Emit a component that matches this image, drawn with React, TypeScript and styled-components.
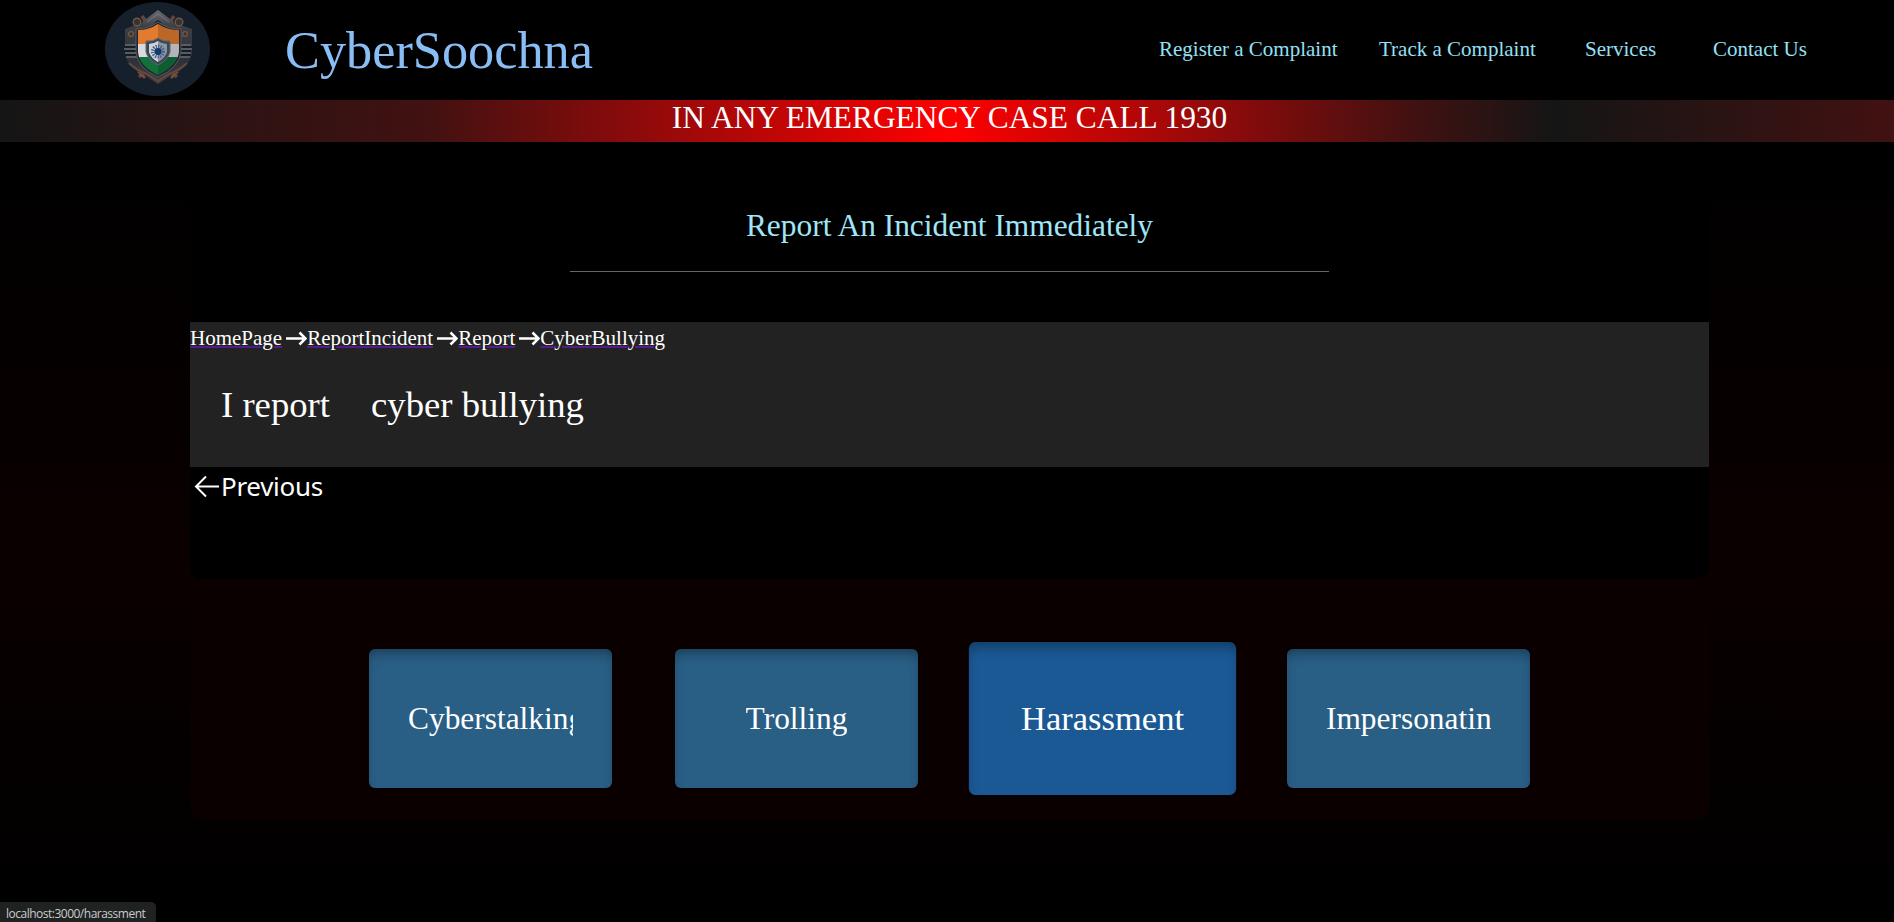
import React from "react";
import styled, { createGlobalStyle } from "styled-components";

const Global = createGlobalStyle`
  * { box-sizing: border-box; }
  html, body { margin: 0; height: 100%; background: #000; overflow: hidden; }
  body { font-family: "Liberation Serif", "Times New Roman", serif; color: #fff; }
`;

const Page = styled.div`
  width: 100%;
  height: 922px;
  display: flex;
  flex-direction: column;
`;
const Header = styled.header`
  height: 100px;
  display: flex;
  align-items: center;
  background: #000;
`;
const Logo = styled.svg`
  width: 105px;
  height: 94px;
  margin: 0 75px 2px 105px;
`;
const Brand = styled.h1`
  margin: 0;
  width: 874px;
  font-size: 52.3px;
  font-weight: 400;
  color: #88bdf5;
`;
const Nav = styled.nav`
  display: flex;
  padding-bottom: 2px;
  font-size: 21px;
  white-space: nowrap;
`;
const NavLink = styled.a<{ $w: number }>`
  width: ${(p) => p.$w}px;
  color: #93e1f5;
`;
const Banner = styled.div`
  height: 42px;
  padding-left: 5px;
  text-align: center;
  font-size: 31.4px;
  line-height: 36px;
  background: linear-gradient(90deg, #151515, #421111 430px, #f00 950px, #421111 1410px, #151515 1555px, #421111 1894px);
`;
const Body = styled.main`
  flex: 1;
  padding: 0 185px 0 190px;
  background: linear-gradient(180deg, #000, #0a0000 52.5%, #000);
`;
const Shell = styled.div`
  height: 677px;
  border-radius: 12px;
  background: linear-gradient(180deg, #000 80px, #0a0000 437px);
`;
const Report = styled.section`
  height: 437px;
  border-radius: 0 0 12px 12px;
  background: #000;
`;
const Heading = styled.h2`
  width: 759px;
  height: 130px;
  margin: 0 auto;
  padding-top: 66px;
  border-bottom: 1px solid #666;
  font-size: 31.4px;
  line-height: 36px;
  font-weight: 400;
  text-align: center;
  color: #a0e6f8;
`;
const Summary = styled.div`
  height: 145px;
  margin-top: 50px;
  background: #222;
`;
const Trail = styled.div`
  height: 32px;
  display: flex;
  align-items: center;
  font-size: 21px;
`;
const Crumb = styled.a`
  color: #fff;
  text-decoration: underline #551a8b 2px;
`;
const TrailArrow = styled.svg`
  width: 21px;
  height: 16px;
  margin-left: 4px;
`;
const Statement = styled.div`
  display: flex;
  gap: 41px;
  padding: 30px 0 0 31px;
  font-size: 36.7px;
  line-height: 42px;
`;
const Previous = styled.a`
  display: flex;
  align-items: center;
  height: 38px;
  padding-left: 4px;
  font: 26px "Noto Sans", sans-serif;
  letter-spacing: -0.3px;
`;
const BackArrow = styled.svg`
  width: 26px;
  height: 24px;
  margin-right: 1px;
`;
const Cards = styled.div`
  height: 240px;
  display: flex;
  gap: 63px;
  padding: 70px 0 0 179px;
`;
const Card = styled.a<{ $active?: boolean }>`
  width: 243px;
  height: 139px;
  display: flex;
  align-items: center;
  justify-content: center;
  border-radius: 6px;
  background: ${(p) => (p.$active ? "#1b5995" : "#295e85")};
  box-shadow: inset 0 8px 12px -4px rgba(0, 0, 0, 0.35);
  transform: ${(p) => (p.$active ? "scale(1.1)" : "none")};
`;
const CardLabel = styled.span`
  max-width: 165px;
  overflow: hidden;
  white-space: nowrap;
  font-size: 31.4px;
  line-height: 36px;
`;
const StatusBar = styled.div`
  position: absolute;
  left: 0;
  bottom: 0;
  width: 156px;
  height: 20px;
  padding-left: 6px;
  border-radius: 0 5px 0 0;
  background: #202222;
  color: #c8cccc;
  font: 12px/23px "Open Sans", sans-serif;
  letter-spacing: -0.5px;
`;

const links: [string, number][] = [
  ["Register a Complaint", 220],
  ["Track a Complaint", 206],
  ["Services", 128],
  ["Contact Us", 100],
];
const crumbs = ["HomePage", "ReportIncident", "Report", "CyberBullying"];
const cards = ["Cyberstalking", "Trolling", "Harassment", "Impersonatin"];

function Emblem() {
  return (
    <Logo viewBox="0 0 105 94">
      <defs>
        <linearGradient id="metal" x1="0" y1="0" x2="0" y2="1">
          <stop offset="0" stopColor="#6a6d72" />
          <stop offset="1" stopColor="#35383e" />
        </linearGradient>
        <linearGradient id="plate" x1="0" y1="0" x2="0" y2="1">
          <stop offset="0" stopColor="#3f4044" />
          <stop offset=".6" stopColor="#2c3038" />
          <stop offset="1" stopColor="#493c3a" />
        </linearGradient>
        <clipPath id="flag">
          <path d="M33 28Q44 28 53 22Q62 28 74 28V50Q72 64 53 73Q34 64 33 50Z" />
        </clipPath>
      </defs>
      <ellipse cx="52.5" cy="47" rx="52.5" ry="47" fill="#16202d" />
      <path d="M37 14L45 26M69 14L61 26M34 75L45 65M72 75L61 65" stroke="#6b4335" strokeWidth="3.4" />
      <path d="M33 69l7 7M73 69l-7 7" stroke="#7a4c3a" strokeWidth="2.6" />
      <path d="M20 27L28 24L36 21H70L78 24L87 27V53Q83 66 68 72L53 82L38 72Q23 66 20 53Z" fill="url(#plate)" />
      <path d="M37 20L53 8L69 20L65 27L53 18L41 27Z" fill="url(#metal)" />
      <path d="M42 20L53 12L64 20" fill="none" stroke="#8a8b8c" strokeWidth="1" opacity=".6" />
      <path d="M20 43h12M19 47h13M20 51h12M21 55h12M74 43h12M74 47h13M74 51h12M73 55h12" stroke="#666b72" strokeWidth="1.5" />
      <path d="M19 45h13M20 49h12M20 53h12M74 45h13M74 49h12M74 53h12" stroke="#171b22" strokeWidth="2" />
      <path d="M24 61Q31 68 42 72L53 79L64 72Q75 68 82 61" fill="none" stroke="#5e4a43" strokeWidth="2" />
      <g fill="#39322f" stroke="#6e5747" strokeWidth="1.4">
        <circle cx="32" cy="20" r="3.8" /><circle cx="74" cy="20" r="3.8" />
        <circle cx="26" cy="32" r="2.4" /><circle cx="80" cy="32" r="2.4" />
      </g>
      <path d="M31 27Q44 27 53 20Q62 27 76 27V50Q74 66 53 75Q32 66 31 50Z" fill="#20252d" stroke="#555a62" strokeWidth="1" />
      <g clipPath="url(#flag)">
        <path fill="#e37b2f" d="M31 20h45v22H31z" />
        <path fill="#d8dade" d="M31 42h45v14H31z" />
        <path fill="#12703d" d="M31 55h45v20H31z" />
        <path fill="#000" opacity=".17" d="M53 20h23v56H53z" />
      </g>
      <path d="M41 39Q48 40 53 36Q58 40 65 39V50Q63 58 53 63Q43 58 41 50Z" fill="#3b4853" stroke="#5c6670" strokeWidth="1" />
      <path d="M44 42Q49 42 53 39Q57 42 62 42V50Q60 56 53 60Q46 56 44 50Z" fill="#8c97a5" />
      <path d="M44 42Q49 42 53 39V60Q46 56 44 50Z" fill="#ced2da" />
      <circle cx="53" cy="49.5" r="5" fill="none" stroke="#45608a" strokeWidth="4" strokeDasharray="1.2 1.1" />
      <circle cx="53" cy="49.5" r="3.4" fill="#16376b" />
    </Logo>
  );
}

export default function App() {
  return (
    <Page>
      <Global />
      <Header>
        <Emblem />
        <Brand>CyberSoochna</Brand>
        <Nav>
          {links.map(([label, w]) => (
            <NavLink key={label} $w={w}>{label}</NavLink>
          ))}
        </Nav>
      </Header>
      <Banner>IN ANY EMERGENCY CASE CALL 1930</Banner>
      <Body>
        <Shell>
          <Report>
            <Heading>Report An Incident Immediately</Heading>
            <Summary>
              <Trail>
                {crumbs.map((c, i) => (
                  <React.Fragment key={c}>
                    {i > 0 && (
                      <TrailArrow viewBox="0 0 21 16" fill="none" stroke="#fff" strokeWidth="2.6">
                        <path d="M0 8.5H19M13.5 2.5L19.5 8.5L13.5 14.5" />
                      </TrailArrow>
                    )}
                    <Crumb>{c}</Crumb>
                  </React.Fragment>
                ))}
              </Trail>
              <Statement>
                <span>I report</span>
                <span>cyber bullying</span>
              </Statement>
            </Summary>
            <Previous>
              <BackArrow viewBox="0 0 26 24" fill="none" stroke="#fff" strokeWidth="2">
                <path d="M25 12.5H2M12 2.5L2 12.5L12 22.5" />
              </BackArrow>
              Previous
            </Previous>
          </Report>
          <Cards>
            {cards.map((c) => (
              <Card key={c} $active={c === "Harassment"}>
                <CardLabel>{c}</CardLabel>
              </Card>
            ))}
          </Cards>
        </Shell>
      </Body>
      <StatusBar>localhost:3000/harassment</StatusBar>
    </Page>
  );
}
